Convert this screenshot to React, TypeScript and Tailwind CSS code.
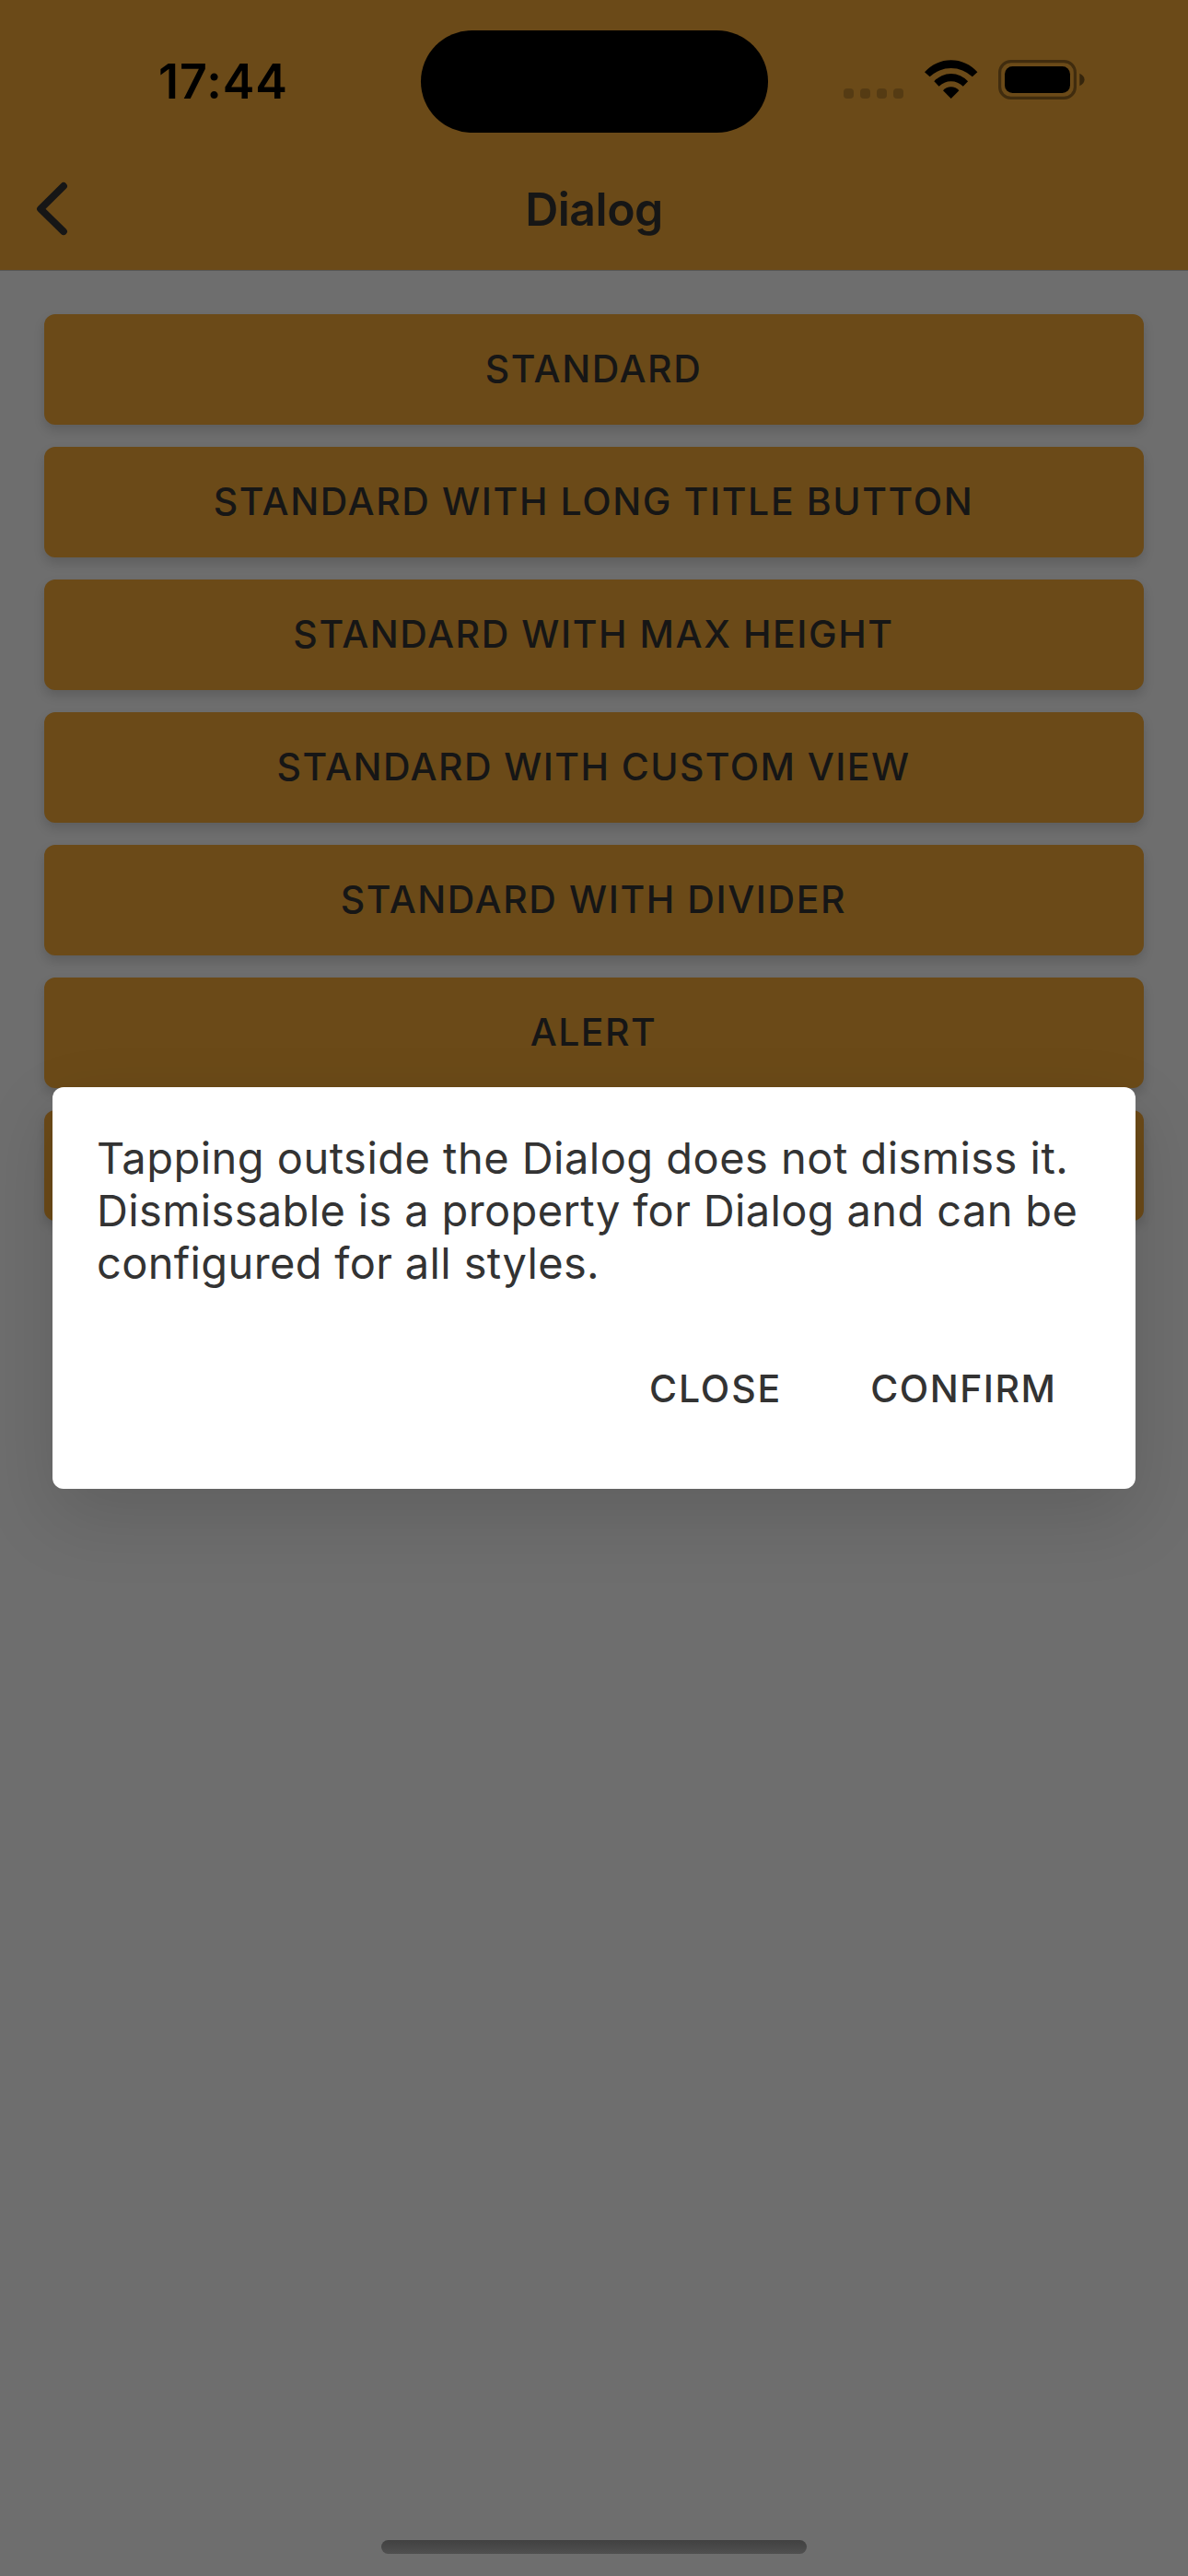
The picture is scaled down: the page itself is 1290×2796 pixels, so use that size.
const actions = [
  { label: "STANDARD", tracking: "tracking-[1.56px]" },
  { label: "STANDARD WITH LONG TITLE BUTTON", tracking: "tracking-[1.6px]" },
  { label: "STANDARD WITH MAX HEIGHT", tracking: "tracking-[1.55px]" },
  { label: "STANDARD WITH CUSTOM VIEW", tracking: "tracking-[1.4px]" },
  { label: "STANDARD WITH DIVIDER", tracking: "tracking-[1.57px]" },
  { label: "ALERT", tracking: "tracking-[1.45px]" },
  { label: "", tracking: "" },
];

function WifiIcon() {
  return (
    <svg width="58" height="43" viewBox="0 0 58 43" fill="#000">
      <path d="M0 13.3A38.2 38.2 0 0 1 57.4 13.3L51.8 18.3A33.3 33.3 0 0 0 5.6 18.3Z" />
      <path d="M10.3 23.3A24.5 24.5 0 0 1 47.1 23.3L41.8 28.7A18.6 18.6 0 0 0 15.6 28.7Z" />
      <path d="M20 33.3A11.4 11.4 0 0 1 37.4 33.3L28.7 42Z" />
    </svg>
  );
}

function BatteryIcon() {
  return (
    <svg width="94" height="43" viewBox="0 0 94 43" fill="none">
      <rect x="1.6" y="1.6" width="81.8" height="39.8" rx="12" stroke="#000" strokeOpacity="0.4" strokeWidth="3.2" />
      <rect x="7" y="7" width="71" height="29" rx="8.5" fill="#000" />
      <path d="M88.3 14.8C91.3 16 93.6 18.6 93.6 21.5S91.3 27 88.3 28.2Z" fill="#000" fillOpacity="0.5" />
    </svg>
  );
}

function StatusBar() {
  return (
    <div className="flex h-[161px] items-start justify-between">
      <div className="w-[457px] pt-[59px] pl-[172px] text-[52px] leading-[60px] font-semibold tracking-[0.97px] text-black">
        17:44
      </div>
      <div className="mt-[33px] h-[111px] w-[377px] rounded-full bg-black" />
      <div className="flex w-[456px] items-start pt-[65px] pl-[82px]">
        <div className="mt-[31px] flex gap-[7px]">
          {[0, 1, 2, 3].map((dot) => (
            <span key={dot} className="size-[11px] rounded-[4px] bg-black/20" />
          ))}
        </div>
        <div className="ml-[23px]">
          <WifiIcon />
        </div>
        <div className="ml-[22px]">
          <BatteryIcon />
        </div>
      </div>
    </div>
  );
}

function NavBar() {
  return (
    <div className="grid h-[132px] grid-cols-[1fr_auto_1fr] items-center">
      <svg className="ml-[36px]" width="44" height="64" viewBox="36 195 44 64" fill="none">
        <path d="M69 202L44 226.7L69 251.2" stroke="#161616" strokeWidth="7.8" strokeLinecap="round" strokeLinejoin="round" />
      </svg>
      <h1 className="text-[50px] leading-[60px] font-semibold tracking-[-0.5px] text-[#161616]">Dialog</h1>
      <span />
    </div>
  );
}

export default function App() {
  return (
    <div className="relative flex h-[2796px] w-[1290px] flex-col overflow-hidden bg-[#6e6e6e] font-['Inter',sans-serif]">
      <header className="h-[294px] shrink-0 border-b border-[#575655] bg-[#6b4a18]">
        <StatusBar />
        <NavBar />
      </header>

      <main className="flex flex-1 flex-col gap-6 px-12 pt-[47px]">
        {actions.map((action, i) => (
          <button
            key={i}
            className={`h-[120px] rounded-xl bg-[#6b4a18] pr-px pb-[2px] text-[41px] leading-[50px] font-medium whitespace-nowrap text-[#161616] shadow-[0_6px_12px_rgba(0,0,0,0.15)] ${action.tracking}`}
          >
            {action.label}
          </button>
        ))}
      </main>

      <div className="flex shrink-0 justify-center pb-6">
        <div className="h-[15px] w-[462px] rounded-full bg-linear-to-b from-[#414141] to-[#505050]" />
      </div>

      <section
        role="dialog"
        className="absolute top-[1180px] left-[57px] flex h-[436px] w-[1176px] flex-col gap-12 rounded-xl bg-white p-12 text-[#333333] shadow-[0_30px_80px_rgba(0,0,0,0.13)]"
      >
        <p className="text-[47px] leading-[57px] whitespace-nowrap">
          <span className="block tracking-[0.47px]">Tapping outside the Dialog does not dismiss it.</span>
          <span className="block tracking-[0.36px]">Dismissable is a property for Dialog and can be</span>
          <span className="block tracking-[0.35px]">configured for all styles.</span>
        </p>
        <div className="flex h-[120px] items-center justify-end gap-6 pr-[1.5px] text-[41px] font-medium">
          <button className="h-full px-9 pt-[2px] tracking-[1.9px]">CLOSE</button>
          <button className="h-full px-9 pt-[2px] tracking-[1.5px]">CONFIRM</button>
        </div>
      </section>
    </div>
  );
}
